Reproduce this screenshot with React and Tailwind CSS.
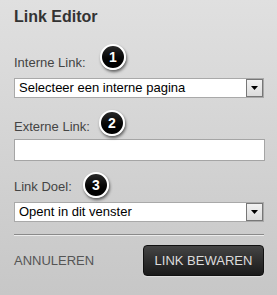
const Badge = ({ n, className }) => (
  <span
    className={`absolute flex h-[26px] w-[26px] items-center justify-center rounded-full border-2 border-white bg-gradient-to-b from-[#2a2a2a] to-black text-[14px] font-bold text-white shadow-[1px_2px_3px_rgba(0,0,0,0.55)] ${className}`}
  >
    {n}
  </span>
);

const FakeSelect = ({ value }) => (
  <div className="flex h-5 w-[250px] items-stretch border border-[#a9a9a9] bg-white">
    <span className="flex-1 truncate pl-1 text-[13px] leading-[18px] text-black">{value}</span>
    <span className="flex w-[17px] items-center justify-center border border-[#777] bg-gradient-to-b from-[#f2f2f2] to-[#dcdcdc]">
      <svg width="7" height="4" viewBox="0 0 7 4">
        <path d="M0 0H7L3.5 4Z" fill="#000" />
      </svg>
    </span>
  </div>
);

const App = () => {
  return (
    <div className="h-[295px] w-[277px] overflow-hidden bg-gradient-to-b from-[#e0e0e0] to-[#c7c7c7] pl-[14px] pt-2 font-['Liberation_Sans',Arial,sans-serif]">
      {/* Title */}
      <h2 className="text-[16px] font-bold leading-[18px] text-[#333]">Link Editor</h2>

      {/* Interne link */}
      <div className="relative mt-[29px] text-[13px] leading-4 text-[#444]">
        Interne Link:
        <Badge n="1" className="left-[86px] top-[-11px]" />
      </div>
      <div className="mt-[7px]">
        <FakeSelect value="Selecteer een interne pagina" />
      </div>

      {/* Externe link */}
      <div className="relative mt-[21px] text-[13px] leading-4 text-[#444]">
        Externe Link:
        <Badge n="2" className="left-[85px] top-[-9px]" />
      </div>
      <div className="mt-1 h-[22px] w-[251px] border border-[#a5a5a5] bg-white" />

      {/* Link doel */}
      <div className="relative mt-[18px] text-[13px] leading-4 text-[#444]">
        Link Doel:
        <Badge n="3" className="left-[69px] top-[-7px]" />
      </div>
      <div className="mt-[7px]">
        <FakeSelect value="Opent in dit venster" />
      </div>

      <div className="mt-3 w-[250px] border-t border-b border-t-[#8a8a8a] border-b-[#ececec]" />

      {/* Actions */}
      <div className="mt-[9px] flex w-[250px] items-center justify-between">
        <span className="text-[13px] leading-4 text-[#555]">ANNULEREN</span>
        <button className="h-[31px] w-[121px] rounded-[4px] border border-[#111] bg-gradient-to-b from-[#454545] to-[#1a1a1a] text-[13px] text-[#dcdcdc] shadow-[0_1px_1px_rgba(255,255,255,0.4)]">
          LINK BEWAREN
        </button>
      </div>
    </div>
  );
};

export default App;
